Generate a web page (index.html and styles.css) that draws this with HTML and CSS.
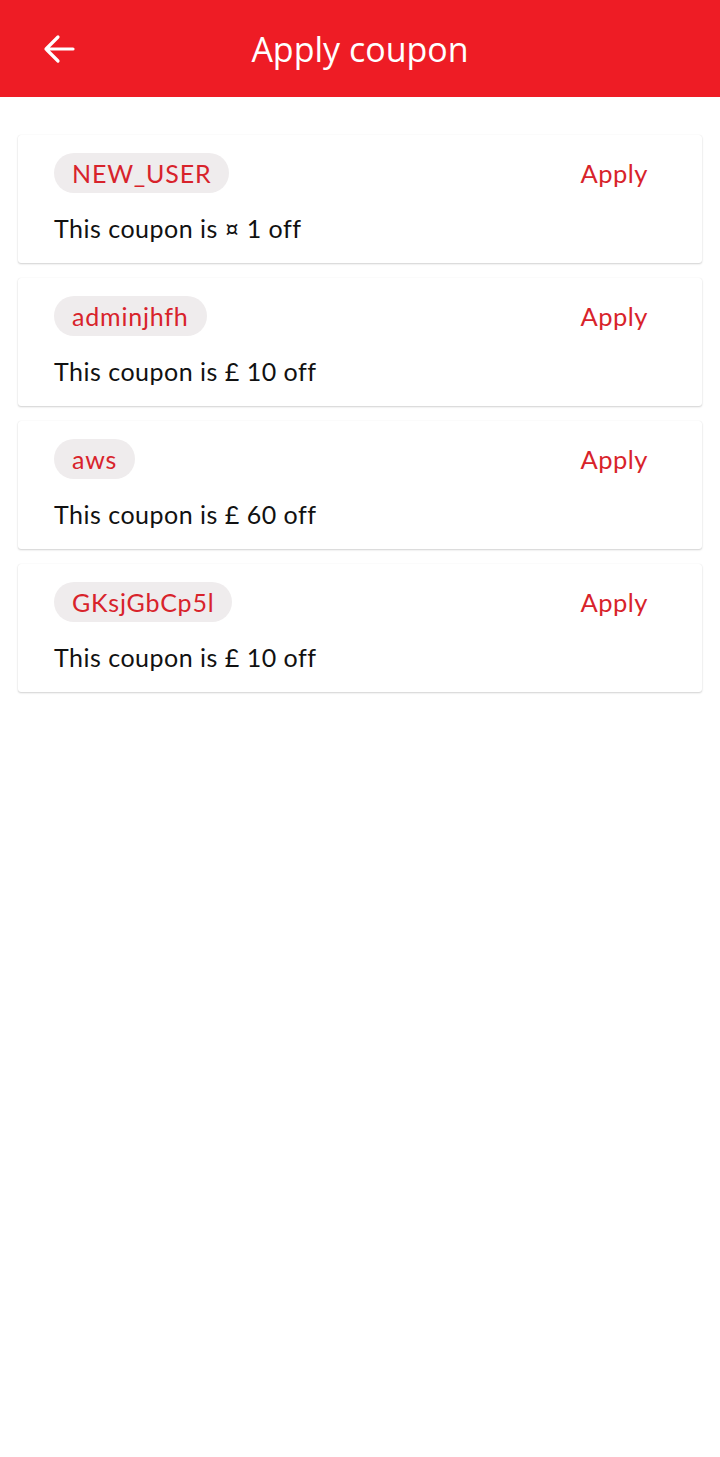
FILE: index.html
```html
<!DOCTYPE html>
<html>
<head>
<meta charset="utf-8">
<link rel="stylesheet" href="styles.css">
</head>
<body>
<header class="appbar">
  <button class="back" aria-label="Back">
    <svg width="34" height="30" viewBox="0 0 34 30"><path d="M31 15H4M16 3L4 15L16 27" fill="none" stroke="#fff" stroke-width="3.2" stroke-linecap="round" stroke-linejoin="round"/></svg>
  </button>
  <h1 class="title">Apply coupon</h1>
</header>
<main class="list">
  <div class="card">
    <div class="row"><span class="chip">NEW_USER</span><span class="apply">Apply</span></div>
    <p class="desc">This coupon is ¤ 1 off</p>
  </div>
  <div class="card">
    <div class="row"><span class="chip">adminjhfh</span><span class="apply">Apply</span></div>
    <p class="desc">This coupon is £ 10 off</p>
  </div>
  <div class="card">
    <div class="row"><span class="chip">aws</span><span class="apply">Apply</span></div>
    <p class="desc">This coupon is £ 60 off</p>
  </div>
  <div class="card">
    <div class="row"><span class="chip">GKsjGbCp5l</span><span class="apply">Apply</span></div>
    <p class="desc">This coupon is £ 10 off</p>
  </div>
</main>
</body>
</html>
```
FILE: styles.css
```css
* { box-sizing: border-box; }
body {
  margin: 0;
  background: #fff;
  font-family: "Open Sans", "Noto Sans", sans-serif;
}
.appbar {
  height: 97px;
  background: #ee1c25;
  display: flex;
  align-items: center;
  justify-content: center;
  position: relative;
}
.back {
  position: absolute;
  left: 42px;
  top: 34px;
  background: none;
  border: 0;
  padding: 0;
  width: 34px;
  height: 30px;
  display: flex;
}
.title {
  margin: 0;
  color: #fff;
  font-weight: 400;
  font-size: 34px;
  font-family: "Open Sans", sans-serif;
  letter-spacing: 0;
}
.list {
  padding: 38px 18px;
  display: flex;
  flex-direction: column;
  gap: 15px;
}
.card {
  height: 128px;
  background: #fff;
  border-radius: 3px;
  box-shadow: 0 1px 2px rgba(0,0,0,0.18), 0 0 1px rgba(0,0,0,0.1);
  padding: 18px 54px 0 36px;
}
.row {
  display: flex;
  justify-content: space-between;
  align-items: center;
  height: 40px;
}
.chip {
  background: #efeced;
  color: #d8232b;
  border-radius: 20px;
  height: 40px;
  line-height: 40px;
  padding: 0 18px;
  font-size: 25px;
  letter-spacing: 0.8px;
  font-family: "Lato", sans-serif;
}
.apply {
  color: #d8232b;
  font-size: 25.5px;
  letter-spacing: 0.5px;
  font-family: "Lato", sans-serif;
}
.desc {
  margin: 19px 0 0;
  font-size: 25px;
  letter-spacing: 0.5px;
  line-height: 32px;
  color: #111;
  font-family: "Lato", sans-serif;
}
```
